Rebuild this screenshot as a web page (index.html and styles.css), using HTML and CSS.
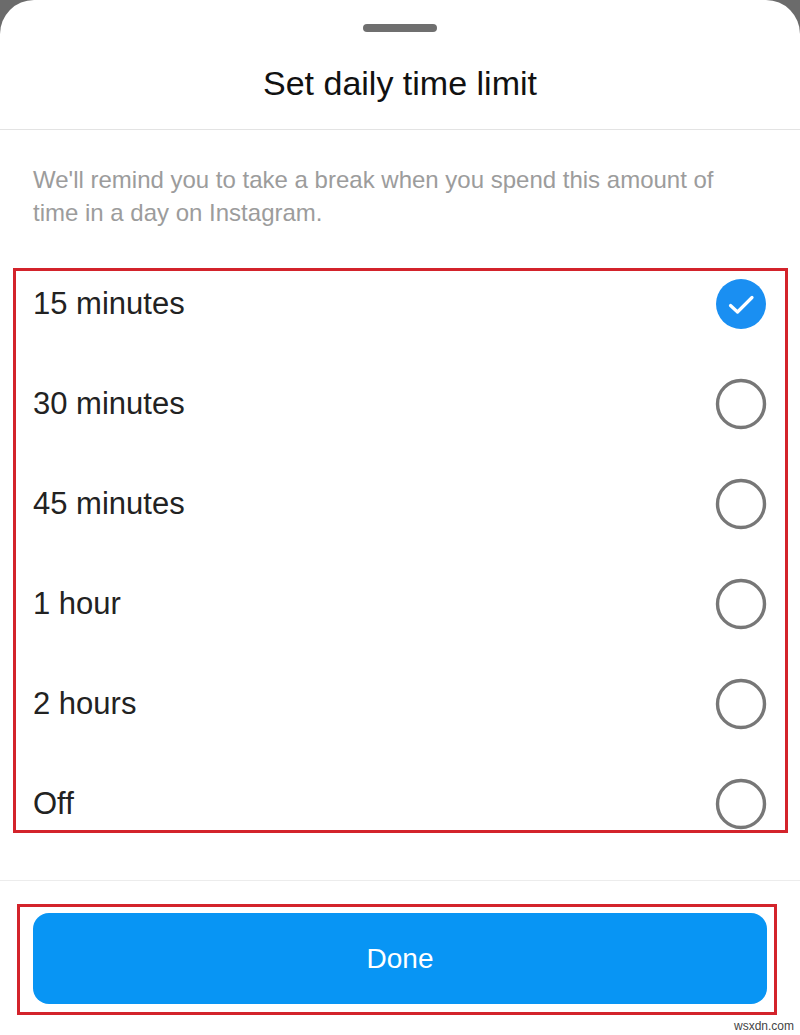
FILE: index.html
```html
<!DOCTYPE html>
<html lang="en">
<head>
<meta charset="utf-8">
<title>Set daily time limit</title>
<link rel="stylesheet" href="styles.css">
</head>
<body>
<div class="sheet">
  <div class="handle"></div>
  <h1 class="title">Set daily time limit</h1>
  <div class="divider"></div>
  <p class="desc">We'll remind you to take a break when you spend this amount of time in a day on Instagram.</p>
  <div class="highlight options">
    <div class="row"><span class="label">15 minutes</span>
      <svg class="radio" viewBox="0 0 52 52" width="52" height="52"><circle cx="26" cy="26" r="25" fill="#1a8ff2"/><path d="M15.5 27.5 L22.5 34 L37 19.5" fill="none" stroke="#fff" stroke-width="3.2" stroke-linecap="round" stroke-linejoin="round"/></svg>
    </div>
    <div class="row"><span class="label">30 minutes</span>
      <svg class="radio" viewBox="0 0 52 52" width="52" height="52"><circle cx="26" cy="26" r="23.5" fill="none" stroke="#777" stroke-width="3.4"/></svg>
    </div>
    <div class="row"><span class="label">45 minutes</span>
      <svg class="radio" viewBox="0 0 52 52" width="52" height="52"><circle cx="26" cy="26" r="23.5" fill="none" stroke="#777" stroke-width="3.4"/></svg>
    </div>
    <div class="row"><span class="label">1 hour</span>
      <svg class="radio" viewBox="0 0 52 52" width="52" height="52"><circle cx="26" cy="26" r="23.5" fill="none" stroke="#777" stroke-width="3.4"/></svg>
    </div>
    <div class="row"><span class="label">2 hours</span>
      <svg class="radio" viewBox="0 0 52 52" width="52" height="52"><circle cx="26" cy="26" r="23.5" fill="none" stroke="#777" stroke-width="3.4"/></svg>
    </div>
    <div class="row"><span class="label">Off</span>
      <svg class="radio" viewBox="0 0 52 52" width="52" height="52"><circle cx="26" cy="26" r="23.5" fill="none" stroke="#777" stroke-width="3.4"/></svg>
    </div>
  </div>
  <div class="divider bottom-divider"></div>
  <div class="highlight done-box">
    <button class="done">Done</button>
  </div>
  <span class="watermark">wsxdn.com</span>
</div>
</body>
</html>
```
FILE: styles.css
```css
html, body {
  margin: 0;
  padding: 0;
  background: #6b6b6b;
}
body {
  font-family: "Liberation Sans", Arial, sans-serif;
  width: 800px;
  height: 1035px;
  overflow: hidden;
}
.sheet {
  position: relative;
  background: #fff;
  height: 1035px;
  border-radius: 34px 34px 0 0;
  display: flex;
  flex-direction: column;
}
.handle {
  width: 74px;
  height: 8px;
  border-radius: 4px;
  background: #6f6f6f;
  margin: 24px auto 0;
}
.title {
  margin: 31px 0 26px;
  font-size: 34px;
  line-height: 40px;
  font-weight: normal;
  color: #111;
  text-align: center;
}
.divider {
  height: 1px;
  background: #e3e3e3;
}
.desc {
  margin: 0;
  padding: 33px 60px 0 33px;
  font-size: 24px;
  line-height: 33px;
  color: #9c9c9c;
}
.highlight {
  border: 3px solid #d3232b;
}
.options {
  margin: 39px 12px 0 13px;
  padding: 7px 19px 0 17px;
  display: flex;
  flex-direction: column;
  gap: 48px;
}
.row {
  display: flex;
  align-items: center;
  justify-content: space-between;
  height: 52px;
}
.label {
  font-size: 31px;
  color: #222;
}
.radio {
  display: block;
  flex: none;
  margin-right: -1px;
}
.bottom-divider {
  margin-top: 47px;
  background: #ececec;
}
.done-box {
  margin: 23px 23px 0 17px;
  padding: 6px 7px 8px 13px;
}
.done {
  display: block;
  width: 100%;
  height: 91px;
  border: 0;
  border-radius: 16px;
  background: #0895f4;
  color: #fff;
  font-family: "Liberation Sans", Arial, sans-serif;
  font-size: 28px;
}
.watermark {
  position: absolute;
  right: 6px;
  bottom: 2px;
  font-size: 12px;
  color: #444;
}
```
